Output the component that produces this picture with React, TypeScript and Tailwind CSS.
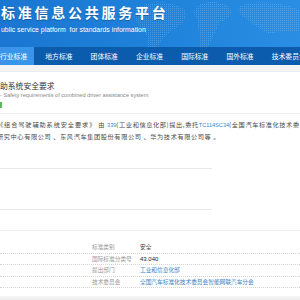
import React from "react"

const navItems = ["行业标准", "地方标准", "团体标准", "企业标准", "国际标准", "国外标准", "技术委员会"]

const rows = [
  { label: "标准类别", value: "安全", kind: "text" },
  { label: "国际标准分类号", value: "43.040", kind: "num" },
  { label: "提出部门", value: "工业和信息化部", kind: "link" },
  { label: "技术委员会", value: "全国汽车标准化技术委员会智能网联汽车分会", kind: "link" },
]

function MapDots() {
  return (
    <svg className="absolute right-0 top-0 h-[47px] w-[170px]" viewBox="0 0 170 47">
      <defs>
        <pattern id="dots" width="2" height="2" patternUnits="userSpaceOnUse">
          <rect width="1" height="1" fill="#ffffff" />
        </pattern>
      </defs>
      <g fill="url(#dots)" opacity="0.18">
        <path d="M10 6 C25 0 45 2 55 10 C60 18 50 26 42 30 C35 36 30 44 26 47 L18 47 C20 38 14 30 8 24 C2 16 4 10 10 6 Z" />
        <path d="M70 4 C80 0 95 2 100 8 C104 16 96 20 90 22 C86 30 82 40 78 47 L70 47 C72 36 66 28 68 20 C62 14 64 8 70 4 Z" />
        <path d="M110 6 C125 0 150 2 165 8 L170 10 L170 30 C160 34 150 30 140 34 C132 30 124 26 118 20 C110 16 106 10 110 6 Z" />
      </g>
    </svg>
  )
}

export default function App() {
  return (
    <div className="h-[300px] w-[300px] overflow-hidden bg-white font-['Noto_Sans_CJK_SC',sans-serif]">
      {/* Header */}
      <div className="relative h-[47px] overflow-hidden bg-gradient-to-r from-[#1a76d1] via-[#1f82da] to-[#2a8ee4]">
        <MapDots />
        <div className="relative pl-[1px] pt-[4px]">
          <div className="text-[14px] font-bold leading-[17px] tracking-[2.75px] text-white [text-shadow:0_1px_1px_rgba(0,0,0,0.25)]">
            标准信息公共服务平台
          </div>
          <div className="mt-[5px] font-['Liberation_Sans',sans-serif] text-[6.9px] leading-[8px] text-white">
            ublic service platform&nbsp; for standards information
          </div>
        </div>
      </div>

      {/* Nav */}
      <div className="-ml-[11px] flex h-[18px] bg-[#0b5cad]">
        {navItems.map((item, i) => (
          <div
            key={item}
            className={`flex h-full w-[45.3px] shrink-0 items-center whitespace-nowrap pl-[11px] text-[6.8px] text-white ${
              i === 0 ? "bg-[#3a95ea]" : ""
            }`}
          >
            {item}
          </div>
        ))}
      </div>
      <div className="h-[7px] border-b border-[#ececec] bg-[#f4f4f4]" />

      {/* Title block */}
      <div className="pt-[9px]">
        <div className="whitespace-nowrap text-[7.8px] leading-[10px] text-[#333]">助系统安全要求</div>
        <div className="mt-[1px] whitespace-nowrap font-['Liberation_Sans',sans-serif] text-[5.6px] leading-[7px] text-[#888]">
          - Safety requirements of combined driver assistance system
        </div>
        <div className="mt-[3px] h-[6px] w-[2px] bg-[#5cb85c]" />
        <div className="mt-[5px] h-px bg-[#eeeeee]" />
      </div>

      {/* Description */}
      <div className="mt-[5px] whitespace-nowrap text-[6.2px] leading-[11px] tracking-[0.6px] text-[#4a4a4a]">
        <div className="-ml-[3px]">
          <span className="tracking-[0.9px]">《组合驾驶辅助系统安全要求》</span> 由{" "}
          <span className="font-['Liberation_Sans',sans-serif] text-[5.6px] tracking-normal text-[#3a86d8]">339</span>(工业和信息化部)提出,委托<span className="font-['Liberation_Sans',sans-serif] text-[5.6px] tracking-normal text-[#3a86d8]">TC114SC34</span>(全国汽车标准化技术委员会智能网联汽车分会)
        </div>
        <div className="-ml-[3px]">研究中心有限公司 、东风汽车集团股份有限公司 、华为技术有限公司等 。</div>
      </div>

      {/* Empty box */}
      <div className="mt-[26px] h-[42px] w-[212px] border-y border-[#e8e8e8]" />

      <div className="mt-[20px] h-px bg-[#efefef]" />

      {/* Info table */}
      <div className="mt-[11px]">
        {rows.map((r) => (
          <div
            key={r.label}
            className="flex h-[11.6px] items-center border-b border-dotted border-[#d4d4d4] text-[5.7px] leading-[8px]"
          >
            <div className="w-[140px] shrink-0 pl-[92px] whitespace-nowrap text-[#999]">{r.label}</div>
            <div
              className={`whitespace-nowrap ${
                r.kind === "link"
                  ? "text-[#3b7fc4]"
                  : r.kind === "num"
                  ? "font-['Liberation_Sans',sans-serif] text-[6px] text-[#222]"
                  : "text-[#333]"
              }`}
            >
              {r.value}
            </div>
          </div>
        ))}
      </div>
      <div className="mt-[8px] h-[6px] bg-gradient-to-b from-[#f6f6f6] to-[#e9e9e9]" />
    </div>
  )
}
